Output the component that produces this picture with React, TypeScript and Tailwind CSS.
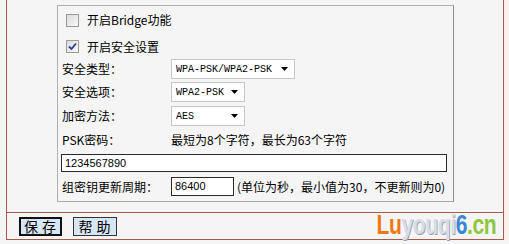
import React from "react";

const cn = '"Noto Sans CJK SC", "Liberation Sans", sans-serif';
const mono = '"Liberation Mono", "Noto Sans CJK SC", monospace';

function Box({ checked }: { checked?: boolean }) {
  return (
    <div className="w-[13px] h-[13px] border border-[#9a9a9a] bg-gradient-to-br from-[#dcdcdc] to-[#f8f8f8] flex items-center justify-center">
      {checked && (
        <svg width="9" height="9" viewBox="0 0 9 9">
          <path d="M1 4.5 L3.5 7 L8 1.5" stroke="#2a3f8a" strokeWidth="1.8" fill="none" />
        </svg>
      )}
    </div>
  );
}

function Sel({ w, text }: { w: string; text: string }) {
  return (
    <div className={`${w} h-[20px] border border-[#c8c8c8] bg-white flex items-center justify-between pl-[4px] pr-[6px]`}>
      <span className="text-[10px] text-black" style={{ fontFamily: mono }}>{text}</span>
      <svg width="7" height="4" viewBox="0 0 7 4"><path d="M0 0 H7 L3.5 4 Z" fill="#000" /></svg>
    </div>
  );
}

export default function App() {
  return (
    <div className="w-[509px] h-[244px] bg-[#f5f5f5] overflow-hidden text-[12px] text-black" style={{ fontFamily: cn }}>
      <div className="flex h-[240px]">
        <div className="w-[6px] shrink-0" />
        <div className="w-[498px] shrink-0 border-l border-r border-b border-[#a65a4e] flex flex-col">
          <div className="pl-[50px] pt-[5px]">
            <div className="w-[397px] h-[197px] border-t border-l border-[#b0b0b0] border-r-[1px] border-r-[#8c8c8c] border-b border-b-[#a8a8a8] bg-[#f5f5f5] flex flex-col">
              <div className="h-[28px] flex items-center pl-[8px] gap-[8px]">
                <Box />
                <span>开启Bridge功能</span>
              </div>
              <div className="h-[25px] flex items-center pl-[8px] gap-[8px]">
                <Box checked />
                <span>开启安全设置</span>
              </div>
              <div className="h-[23px] flex items-start">
                <span className="w-[113px] pl-[4px] leading-[20px]">安全类型：</span>
                <Sel w="w-[124px]" text="WPA-PSK/WPA2-PSK" />
              </div>
              <div className="h-[24px] flex items-start">
                <span className="w-[113px] pl-[4px] leading-[20px]">安全选项：</span>
                <Sel w="w-[74px]" text="WPA2-PSK" />
              </div>
              <div className="h-[20px] flex items-start">
                <span className="w-[113px] pl-[4px] leading-[20px]">加密方法：</span>
                <Sel w="w-[74px]" text="AES" />
              </div>
              <div className="h-[27px] flex items-center">
                <span className="w-[113px] pl-[4px]">PSK密码：</span>
                <span>最短为8个字符，最长为63个字符</span>
              </div>
              <div className="pl-[3px] pt-[1px]">
                <div className="w-[386px] h-[18px] border border-[#2a2a2a] bg-white flex items-center pl-[3px] text-[11px]" style={{ fontFamily: '"Liberation Sans", sans-serif' }}>
                  1234567890
                </div>
              </div>
              <div className="flex items-center mt-[5px] h-[19px]">
                <span className="w-[113px] pl-[4px]">组密钥更新周期：</span>
                <div className="w-[63px] h-[19px] border border-[#2a2a2a] bg-white flex items-center pl-[3px] text-[11px]" style={{ fontFamily: '"Liberation Sans", sans-serif' }}>
                  86400
                </div>
                <span className="pl-[3px]">(单位为秒，最小值为30，不更新则为0)</span>
              </div>
            </div>
          </div>
          <div className="mt-[10px] border-t border-[#a65a4e] flex-1 flex items-center pl-[12px] gap-[11px]">
            <div className="w-[43px] h-[19px] border-2 border-[#111] bg-[#d6e6f2] flex items-center justify-center text-[14px] tracking-[4px] pl-[3px]">保存</div>
            <div className="w-[44px] h-[19px] border border-[#333] bg-[#d6e6f2] flex items-center justify-center text-[14px] tracking-[4px] pl-[3px]">帮助</div>
            <div className="flex-1" />
            <div className="pr-[8px] text-[27px] font-bold leading-none scale-x-[0.78] origin-right tracking-[-0.5px] -mt-[2px]" style={{ fontFamily: '"Liberation Sans", sans-serif' }}>
              <span className="text-[#f07818]">Lu</span>
              <span className="text-[#d8dde6]" style={{ textShadow: "1px 1px 0 #9aa0aa" }}>youqi</span>
              <span className="text-[#3c86d8]">6</span>
              <span className="text-[#8cc83c]">.cn</span>
            </div>
          </div>
        </div>
        <div className="flex-1 bg-[#fcefec]" />
      </div>
    </div>
  );
}
